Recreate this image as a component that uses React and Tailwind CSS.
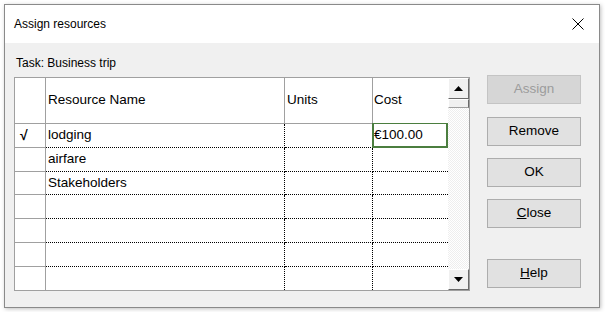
import React from "react";

const F = { fontFamily: '"Liberation Sans", Arial, sans-serif' };

function Btn({ children, disabled, className = "" }) {
  return (
    <div
      className={
        "h-[29px] w-[94px] flex items-center justify-center border text-[13.5px] " +
        (disabled
          ? "bg-[#d6d6d6] border-[#c4c4c4] text-[#9c9c9c] "
          : "bg-[#e1e1e1] border-[#adadad] text-black ") +
        className
      }
    >
      {children}
    </div>
  );
}

function Tri({ down }) {
  return (
    <svg width="9" height="5" viewBox="0 0 9 5">
      <path d={down ? "M0 0 L9 0 L4.5 5 Z" : "M0 5 L9 5 L4.5 0 Z"} fill="#000" />
    </svg>
  );
}

export default function App() {
  const rows = [
    { check: true, name: "lodging", cost: "€100.00" },
    { name: "airfare" },
    { name: "Stakeholders" },
    {},
    {},
    {},
    {},
  ];
  return (
    <div className="w-[605px] h-[312px] bg-white pt-[4px] pl-[4px]" style={F}>
      <div className="w-[596px] h-[304px] border border-[#8a8a8a] bg-[#f0f0f0] flex flex-col shadow-[1px_1px_4px_rgba(0,0,0,0.25)]">
        {/* Title bar */}
        <div className="h-[38px] bg-white flex items-center justify-between pl-[9px] pr-[14px] shrink-0">
          <span className="text-[12px] text-black">Assign resources</span>
          <svg width="12" height="12" viewBox="0 0 12 12" className="mr-[1px]">
            <path d="M0.5 0.5 L11.5 11.5 M11.5 0.5 L0.5 11.5" stroke="#000" strokeWidth="1" />
          </svg>
        </div>
        {/* Body */}
        <div className="flex flex-row flex-1">
          <div className="pl-[9px] flex flex-col">
            <div className="h-[34px] flex items-end pb-[4px] pl-[2px] text-[12px] text-black leading-[20px]">
              Task: Business trip
            </div>
            {/* Grid */}
            <div className="w-[456px] h-[214px] border border-[#a0a0a0] bg-white flex flex-row">
              <div className="flex flex-col w-[433px]">
                {/* Header */}
                <div className="flex flex-row h-[46px] border-b border-[#a0a0a0] text-[13.5px] text-black">
                  <div className="w-[31px] border-r border-[#a0a0a0]" />
                  <div className="w-[239px] border-r border-[#a0a0a0] flex items-center pl-[2px]">Resource Name</div>
                  <div className="w-[88px] border-r border-[#a0a0a0] flex items-center pl-[2px]">Units</div>
                  <div className="flex-1 flex items-center pl-[1px]">Cost</div>
                </div>
                {rows.map((r, i) => (
                  <div key={i} className={"flex flex-row text-[13.5px] text-black " + (i === 6 ? "h-[23px]" : "h-[24px]")}>
                    <div className={"w-[31px] border-r border-[#a0a0a0] flex items-center pl-[5px] font-bold text-[14px] " + (i < 6 ? "border-b border-b-[#a0a0a0]" : "")}>
                      {r.check ? "√" : ""}
                    </div>
                    <div className={"w-[239px] border-r border-dotted border-r-black flex items-center pl-[2px] " + (i < 6 ? "border-b border-b-black" : "")}>
                      {r.name || ""}
                    </div>
                    <div className={"w-[88px] border-r border-dotted border-r-black " + (i < 6 ? "border-b border-b-black" : "")} />
                    <div className={"flex-1 relative flex items-center pl-[1px] " + (i < 6 ? "border-b border-dotted border-b-black" : "")}>
                      {r.cost ? (
                        <>
                          <div className="absolute left-[-1px] right-0 top-[-1px] bottom-[-1px] border-2 border-t border-[#4b7e3f]" />
                          <span>{r.cost}</span>
                        </>
                      ) : null}
                    </div>
                  </div>
                ))}
              </div>
              {/* Scrollbar */}
              <div className="w-[21px] flex flex-col bg-[#f5f5f5]">
                <div className="h-[21px] bg-[#f0f0f0] border-t border-l border-t-white border-l-white border-r border-b border-r-[#6a6a6a] border-b-[#6a6a6a] flex items-center justify-center">
                  <Tri />
                </div>
                <div className="h-[9px] bg-[#f0f0f0] border-t border-l border-t-white border-l-white border-r border-b border-r-[#6a6a6a] border-b-[#a0a0a0]" />
                <div className="flex-1 bg-[repeating-conic-gradient(#ffffff_0_25%,#eeeeee_0_50%)] bg-[length:2px_2px]" />
                <div className="h-[21px] bg-[#f0f0f0] border-t border-l border-t-white border-l-white border-r border-b border-r-[#6a6a6a] border-b-[#6a6a6a] flex items-center justify-center">
                  <Tri down />
                </div>
              </div>
            </div>
          </div>
          {/* Buttons */}
          <div className="ml-[17px] pt-[32px] flex flex-col">
            <Btn disabled>Assign</Btn>
            <Btn className="mt-[13px]">Remove</Btn>
            <Btn className="mt-[12px]">OK</Btn>
            <Btn className="mt-[12px]"><span><span className="underline">C</span>lose</span></Btn>
            <Btn className="mt-[31px]"><span><span className="underline">H</span>elp</span></Btn>
          </div>
        </div>
      </div>
    </div>
  );
}
